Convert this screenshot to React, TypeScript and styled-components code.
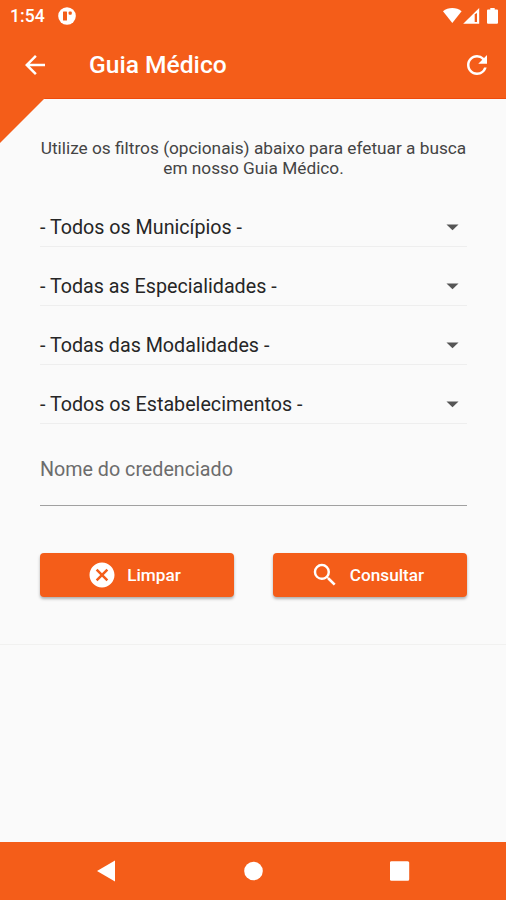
import React from 'react';
import styled, { createGlobalStyle } from 'styled-components';

const ORANGE = '#f45d19';

const GlobalStyle = createGlobalStyle`
  * { box-sizing: border-box; }
  body { margin: 0; background: #fafafa; }
`;

const Screen = styled.div`
  display: flex;
  flex-direction: column;
  width: 506px;
  height: 900px;
  overflow: hidden;
  background: #fafafa;
  font-family: Roboto, 'Liberation Sans', sans-serif;
  color: #262626;
`;

const Header = styled.header`
  height: 99px;
  flex: none;
  background: ${ORANGE};
  border-bottom: 1px solid #ee4a0c;
  color: #fff;
`;

const StatusBar = styled.div`
  height: 31px;
  display: flex;
  align-items: center;
  justify-content: space-between;
  padding: 0 7px 0 10px;
`;

const StatusGroup = styled.div<{ $gap: number }>`
  display: flex;
  align-items: center;
  gap: ${(p) => p.$gap}px;
`;

const Clock = styled.span`
  font-size: 17.6px;
  font-weight: 500;
  line-height: 20px;
`;

const AppBar = styled.div`
  height: 66px;
  display: flex;
  align-items: center;
  padding: 1px 14px 0 20px;
`;

const Title = styled.h1`
  flex: 1;
  margin: 1px 0 0 39px;
  font-size: 24.6px;
  font-weight: 500;
  line-height: 30px;
`;

const IconButton = styled.button`
  display: flex;
  padding: 0;
  border: 0;
  background: none;
  color: inherit;
`;

const Main = styled.main`
  position: relative;
  flex: 1;

  &::before {
    content: '';
    position: absolute;
    left: 0;
    top: -1px;
    width: 45px;
    height: 45px;
    background: ${ORANGE};
    clip-path: polygon(0 0, 100% 0, 0 100%);
  }
`;

const Filters = styled.form`
  height: 546px;
  padding: 40px 39px 0 40px;
  border-bottom: 1px solid #f1f1f0;
`;

const Intro = styled.p`
  margin: -1px 0 10px;
  font-size: 17.25px;
  line-height: 20px;
  text-align: center;
  white-space: nowrap;
  color: #444;
`;

const SelectRow = styled.div`
  height: 59px;
  display: flex;
  align-items: center;
  justify-content: space-between;
  padding: 20px 0 0;
  border-bottom: 1px solid #eee;
  font-size: 19.7px;
`;

const NameField = styled.div`
  height: 82px;
  padding: 34px 0 0;
  border-bottom: 1px solid #a0a0a0;
  font-size: 19.7px;
  line-height: 24px;
  color: #6c6c6c;
`;

const Actions = styled.div`
  display: flex;
  gap: 39px;
  margin-top: 47px;
`;

const ActionButton = styled.button`
  flex: 1;
  height: 44px;
  display: flex;
  align-items: center;
  justify-content: center;
  gap: 10px;
  padding: 0 20px 0 14px;
  border: 0;
  border-radius: 4px;
  background: ${ORANGE};
  box-shadow: 0 2px 3px rgba(0, 0, 0, 0.3);
  color: #fff;
  font: 500 17.2px/20px Roboto, sans-serif;
`;

const NavBar = styled.nav`
  height: 58px;
  flex: none;
  display: flex;
  align-items: center;
  justify-content: space-between;
  padding: 0 96px;
  background: ${ORANGE};
`;

const selects = [
  '- Todos os Municípios -',
  '- Todas as Especialidades -',
  '- Todas das Modalidades -',
  '- Todos os Estabelecimentos -',
];

const MaterialIcon = ({ d }: { d: string }) => (
  <svg width="30" height="30" viewBox="0 0 24 24" fill="currentColor" aria-hidden>
    <path d={d} />
  </svg>
);

const BACK = 'M20 11H7.83l5.59-5.59L12 4l-8 8 8 8 1.41-1.41L7.83 13H20v-2z';
const REFRESH =
  'M17.65 6.35A7.958 7.958 0 0 0 12 4c-4.42 0-7.99 3.58-7.99 8s3.57 8 7.99 8c3.73 0 6.84-2.55 7.73-6h-2.08A5.99 5.99 0 0 1 12 18c-3.31 0-6-2.69-6-6s2.69-6 6-6c1.66 0 3.14.69 4.22 1.78L13 11h7V4l-2.35 2.35z';
const CANCEL =
  'M12 2C6.47 2 2 6.47 2 12s4.47 10 10 10 10-4.47 10-10S17.53 2 12 2zm5 13.59L15.59 17 12 13.41 8.41 17 7 15.59 10.59 12 7 8.41 8.41 7 12 10.59 15.59 7 17 8.41 13.41 12 17 15.59z';
const SEARCH =
  'M15.5 14h-.79l-.28-.27A6.471 6.471 0 0 0 16 9.5 6.5 6.5 0 1 0 9.5 16c1.61 0 3.09-.59 4.23-1.57l.27.28v.79l5 4.99L20.49 19l-4.99-5zm-6 0C7.01 14 5 11.99 5 9.5S7.01 5 9.5 5 14 7.01 14 9.5 11.99 14 9.5 14z';

const AppBadge = () => (
  <svg width="18" height="18" viewBox="0 0 18 18" aria-hidden>
    <circle cx="9" cy="9" r="8.8" fill="#fff" />
    <rect x="5" y="4.4" width="4" height="9.2" rx=".6" fill={ORANGE} />
    <rect x="10.6" y="4.4" width="3.2" height="3.4" rx="1" fill={ORANGE} />
  </svg>
);

const StatusIcons = () => (
  <svg width="56" height="18" viewBox="0 0 56 18" fill="#fff" aria-hidden>
    <path d="M0 4.2C5-.2 13.6-.2 18.6 4.2L9.3 16z" />
    <path d="M36.2 1v15.7H20.2z" />
    <path d="M31.7 7.2V15h2.3V6z" fill={ORANGE} />
    <path d="M47.3 1h4.4v1.6H54q1 0 1 1v12.2q0 1-1 1h-9q-1 0-1-1V3.6q0-1 1-1h2.3z" />
  </svg>
);

const Caret = () => (
  <svg width="30" height="30" viewBox="0 0 24 24" fill="#555" aria-hidden>
    <path d="M7.6 9.9h9.6l-4.8 4.7z" />
  </svg>
);

export default function App() {
  return (
    <Screen>
      <GlobalStyle />
      <Header>
        <StatusBar>
          <StatusGroup $gap={13}>
            <Clock>1:54</Clock>
            <AppBadge />
          </StatusGroup>
          <StatusIcons />
        </StatusBar>
        <AppBar>
          <IconButton aria-label="Voltar"><MaterialIcon d={BACK} /></IconButton>
          <Title>Guia Médico</Title>
          <IconButton aria-label="Atualizar"><MaterialIcon d={REFRESH} /></IconButton>
        </AppBar>
      </Header>
      <Main>
        <Filters>
          <Intro>
            Utilize os filtros (opcionais) abaixo para efetuar a busca
            <br />
            em nosso Guia Médico.
          </Intro>
          {selects.map((label) => (
            <SelectRow key={label}>
              <span>{label}</span>
              <Caret />
            </SelectRow>
          ))}
          <NameField>Nome do credenciado</NameField>
          <Actions>
            <ActionButton type="button"><MaterialIcon d={CANCEL} />Limpar</ActionButton>
            <ActionButton type="button"><MaterialIcon d={SEARCH} />Consultar</ActionButton>
          </Actions>
        </Filters>
      </Main>
      <NavBar>
        <svg width="20" height="22" viewBox="0 0 20 22" fill="#fff" aria-hidden><path d="M1 11 19 .6v20.8z" /></svg>
        <svg width="20" height="20" viewBox="0 0 20 20" fill="#fff" aria-hidden><circle cx="10.5" cy="10" r="9.3" /></svg>
        <svg width="20" height="20" viewBox="0 0 20 20" fill="#fff" aria-hidden><rect x="-.2" y=".3" width="19.4" height="19.4" rx="1.5" /></svg>
      </NavBar>
    </Screen>
  );
}
